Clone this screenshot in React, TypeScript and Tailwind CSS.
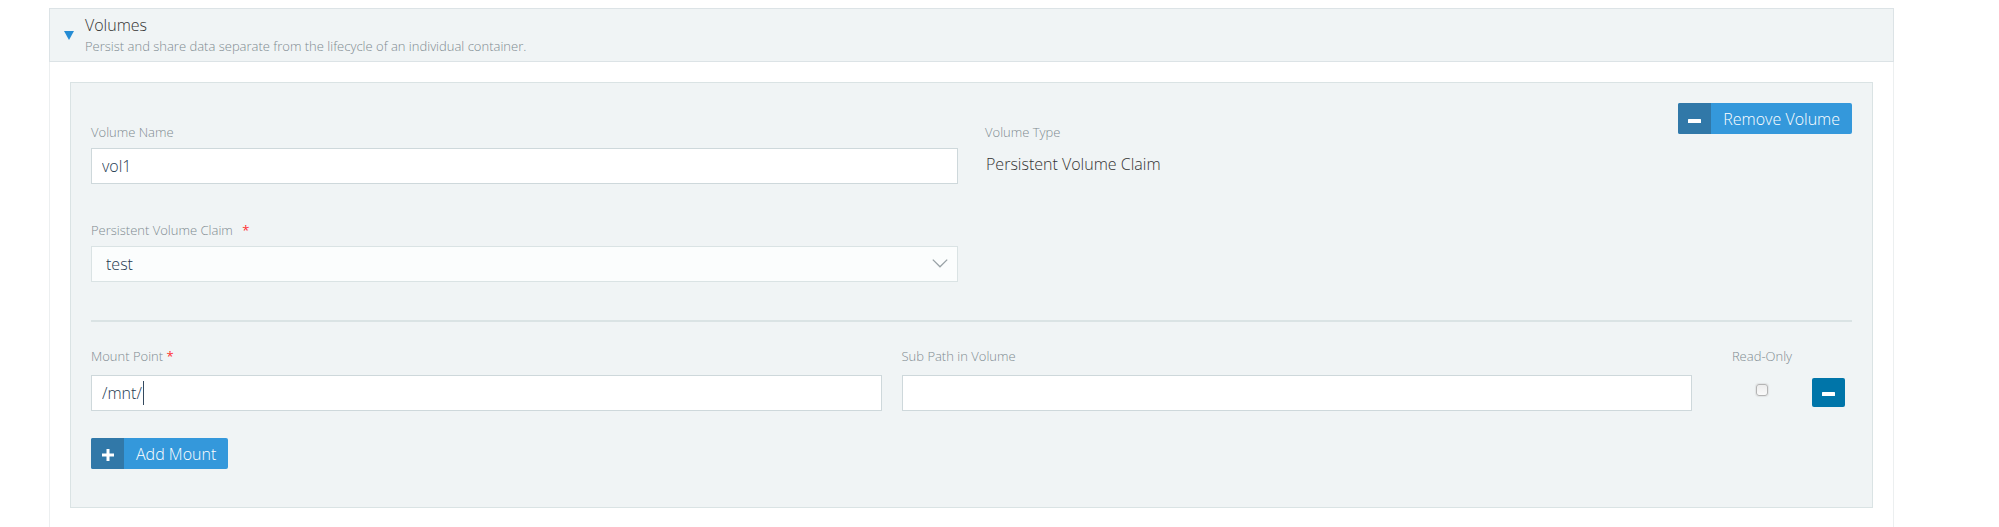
import { useState, type ReactNode } from "react";

function MinusIcon() {
  return (
    <svg width="13" height="12" viewBox="0 0 13 12" aria-hidden="true">
      <rect y="5" width="13" height="4" rx="0.5" fill="#fff" />
    </svg>
  );
}

function PlusIcon() {
  return (
    <svg width="12" height="12" viewBox="0 0 12 12" aria-hidden="true">
      <path d="M4.5 0h3v4.5H12v3H7.5V12h-3V7.5H0v-3h4.5z" fill="#fff" />
    </svg>
  );
}

function IconButton({ icon, children }: { icon: ReactNode; children: ReactNode }) {
  return (
    <button type="button" className="flex h-[31px] items-stretch overflow-hidden rounded-xs bg-[#3498db] text-base font-light text-white">
      <span className="flex w-[33px] items-center justify-center bg-[#3178a8] pt-0.5">{icon}</span>
      <span className="flex items-center px-3">{children}</span>
    </button>
  );
}

const labelClass = "block text-[13px] leading-5 text-[#7f8b91]";
const inputClass =
  "block h-9 w-full border border-[#ced8db] bg-white px-2.5 text-base font-light text-[#22384f] outline-none";

export default function App() {
  const [name, setName] = useState("vol1");
  const [mountPoint, setMountPoint] = useState("/mnt/");
  const [subPath, setSubPath] = useState("");
  const [readOnly, setReadOnly] = useState(false);

  return (
    <main className="min-h-screen bg-white pt-2 pr-[105px] pl-[49px] font-['Open_Sans',sans-serif] font-light text-[#333]">
      <header className="flex h-[54px] items-center border border-[#dce3e6] bg-[#f0f4f5]">
        <button type="button" aria-label="Collapse volumes" className="flex w-[35px] justify-center pl-[3px]">
          <svg width="10" height="9" viewBox="0 0 10 9" aria-hidden="true">
            <path d="M0 0h10L5 9z" fill="#258cd4" />
          </svg>
        </button>
        <div className="pb-0.5">
          <h2 className="text-base leading-6">Volumes</h2>
          <p className="text-[13px] leading-[18px] text-[#7f8b91]">
            Persist and share data separate from the lifecycle of an individual container.
          </p>
        </div>
      </header>

      <div className="min-h-[calc(100vh-62px)] border-x border-[#eceff0] px-5 pt-5">
        <section className="relative border border-[#dae3e4] bg-[#f0f4f5] px-5 pt-[39px] pb-[38px]">
          <div className="absolute top-5 right-5">
            <IconButton icon={<MinusIcon />}>Remove Volume</IconButton>
          </div>

          <div className="grid grid-cols-2 gap-x-[27px] gap-y-9">
            <div>
              <label htmlFor="volume-name" className={labelClass}>Volume Name</label>
              <input id="volume-name" className={`${inputClass} mt-1.5`} value={name} onChange={(e) => setName(e.target.value)} />
            </div>
            <div>
              <div className={labelClass}>Volume Type</div>
              <p className="mt-1.5 pl-px text-base leading-8">Persistent Volume Claim</p>
            </div>
            <div>
              <label htmlFor="claim" className={labelClass}>
                Persistent Volume Claim <span className="ml-1.5 font-normal text-[#ff3030]">*</span>
              </label>
              <div className="relative mt-1.5">
                <select id="claim" className="block h-9 w-full appearance-none border border-[#dae3e4] bg-[#fbfdfd] px-3.5 text-base font-light text-[#22384f] outline-none">
                  <option>test</option>
                </select>
                <svg className="pointer-events-none absolute top-[13px] right-2.5" width="16" height="9" viewBox="0 0 16 9" fill="none" stroke="#98a2a6" strokeWidth="1.3" aria-hidden="true">
                  <path d="M.8.6 8 7.8 15.2.6" />
                </svg>
              </div>
            </div>
          </div>

          <hr className="mt-[38px] border-t-2 border-[#dae3e4]" />

          <div className="mt-6 flex">
            <div className="grid flex-1 grid-cols-2 gap-x-5">
              <div>
                <label htmlFor="mount-point" className={labelClass}>
                  Mount Point <span className="font-normal text-[#ff3030]">*</span>
                </label>
                <div className="relative mt-[9px]">
                  <input id="mount-point" className={inputClass} value={mountPoint} onChange={(e) => setMountPoint(e.target.value)} />
                  <span className="absolute top-1.5 left-[52px] h-6 w-px bg-[#34495e]" />
                </div>
              </div>
              <div>
                <label htmlFor="sub-path" className={labelClass}>Sub Path in Volume</label>
                <input id="sub-path" className={`${inputClass} mt-[9px]`} value={subPath} onChange={(e) => setSubPath(e.target.value)} />
              </div>
            </div>
            <div className="ml-5 flex w-[100px] flex-col items-center">
              <label htmlFor="read-only" className={labelClass}>Read-Only</label>
              <input
                id="read-only"
                type="checkbox"
                className="mt-[18px] size-3 appearance-none rounded-[3px] border border-[#b4b4b4] bg-linear-to-b from-[#ededed] to-[#fafafa] shadow-[0_0_1px_1px_#e2e4e5] checked:from-[#3498db] checked:to-[#3498db]"
                checked={readOnly}
                onChange={(e) => setReadOnly(e.target.checked)}
              />
            </div>
            <div className="w-10 pt-8">
              <button type="button" aria-label="Remove mount" className="flex h-[29px] w-[33px] items-center justify-center rounded-xs bg-[#0075a9]">
                <MinusIcon />
              </button>
            </div>
          </div>

          <div className="mt-[27px] flex">
            <IconButton icon={<PlusIcon />}>Add Mount</IconButton>
          </div>
        </section>
      </div>
    </main>
  );
}
